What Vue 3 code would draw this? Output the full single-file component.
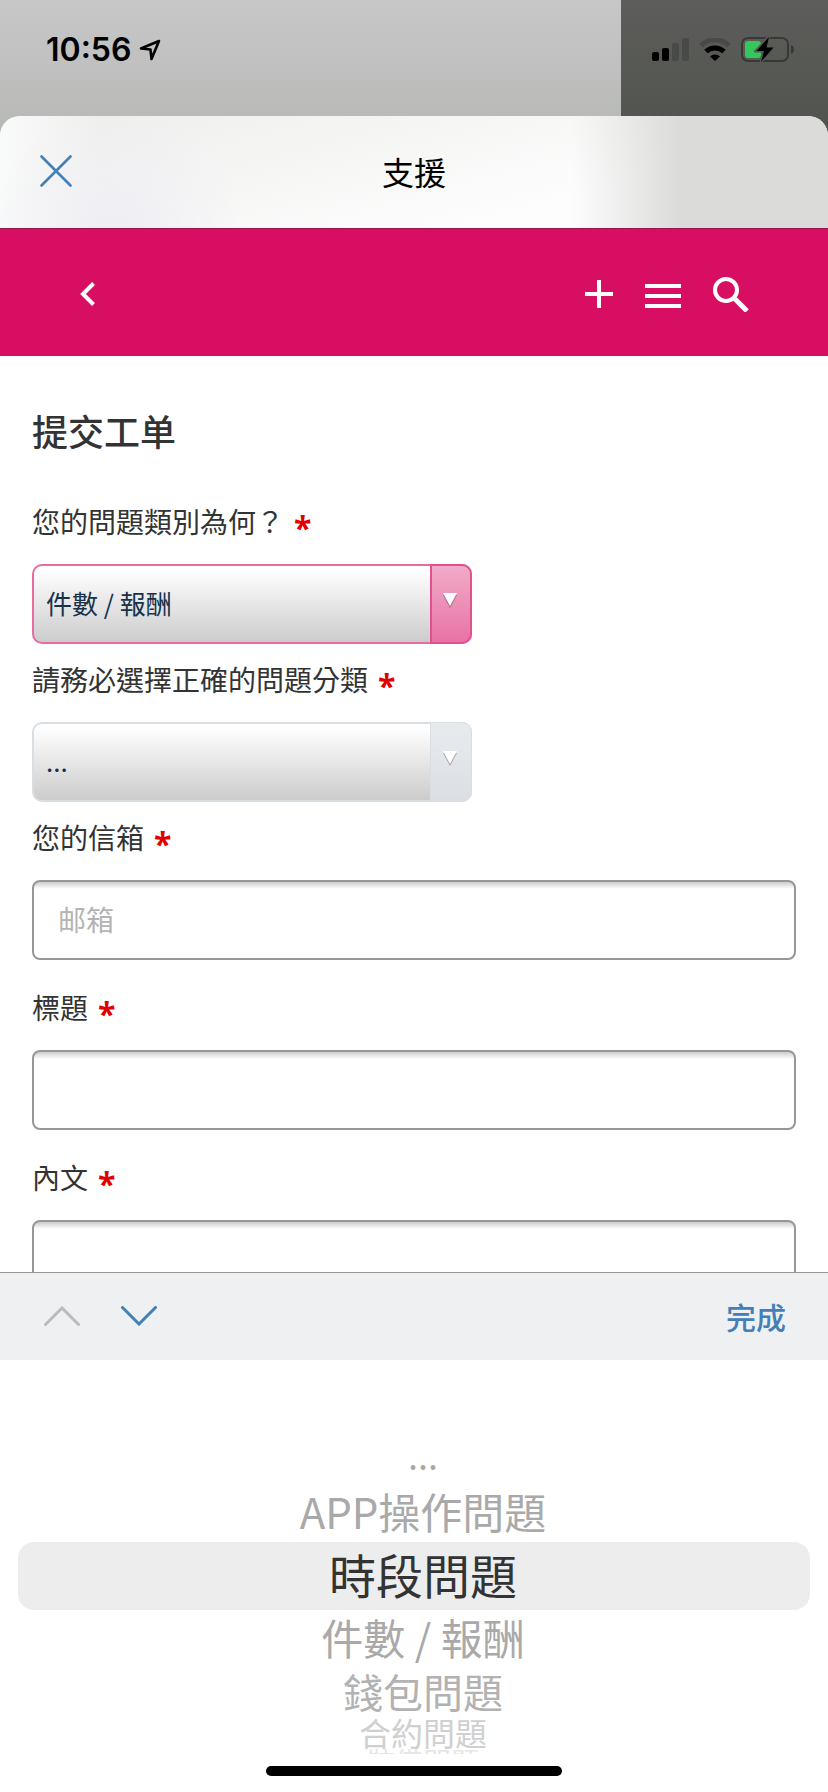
<script setup>
import { ref } from 'vue'

const category = ref('件數 / 報酬')
const subCategory = ref('...')
const email = ref('')
const subject = ref('')
const body = ref('')
const selected = ref('時段問題')

const categories = ['件數 / 報酬', '時段問題', '錢包問題', '合約問題']

const wheel = [
  { text: '...', size: 'far-top' },
  { text: 'APP操作問題', size: 'near' },
  { text: '時段問題', size: 'center' },
  { text: '件數 / 報酬', size: 'near' },
  { text: '錢包問題', size: 'mid' },
  { text: '合約問題', size: 'far' },
  { text: '裝備問題', size: 'edge' },
]
</script>

<template>
  <div class="screen">
    <div class="status">
      <div class="clock">
        <span>10:56</span>
        <svg width="22" height="22" viewBox="0 0 22 22" aria-hidden="true">
          <path d="M20 2 L2 9.5 L11.5 10.5 L12.5 20 Z" fill="none" stroke="#000" stroke-width="2.6" stroke-linejoin="round" />
        </svg>
      </div>
      <div class="signals">
        <svg width="37" height="24" viewBox="0 0 37 24" aria-hidden="true">
          <rect x="0" y="14" width="7" height="9" rx="2" />
          <rect x="10" y="10" width="7" height="13" rx="2" />
          <rect x="20" y="5" width="7" height="18" rx="2" fill="#484a47" />
          <rect x="30" y="0" width="7" height="23" rx="2" fill="#484a47" />
        </svg>
        <svg width="32" height="24" viewBox="0 0 32 24" aria-hidden="true">
          <path d="M2 7.5 A20 20 0 0 1 30 7.5" fill="none" stroke="#484a47" stroke-width="5" />
          <path d="M7 13.5 A13 13 0 0 1 25 13.5" fill="none" stroke="#000" stroke-width="5" />
          <path d="M16 23 L11 18.5 A7 7 0 0 1 21 18.5 Z" />
        </svg>
        <svg width="53" height="28" viewBox="0 0 53 28" aria-hidden="true">
          <rect x="1" y="2" width="46" height="23" rx="6" fill="none" stroke="#373936" stroke-width="2" />
          <rect x="4" y="5" width="16" height="17" rx="3" fill="#34c759" />
          <path d="M50 9 Q53 10 53 13.5 Q53 17 50 18 Z" fill="#373936" />
          <path d="M28 0 L14 15.5 H22 L19.500 27 L34 11 H26 Z" fill="#565954" stroke="#565954" stroke-width="2" stroke-linejoin="round" />
          <path d="M28 1 L15.500 15 H23 L20 26 L32.500 11.500 H25.500 Z" />
        </svg>
      </div>
    </div>

    <header class="sheet-head">
      <button class="close" type="button" aria-label="關閉">
        <svg width="32" height="32" viewBox="0 0 32 32">
          <path d="M1.500 1.500 L30.500 30.500 M30.500 1.500 L1.500 30.500" fill="none" stroke="#4380b7" stroke-width="2.600" stroke-linecap="round" />
        </svg>
      </button>
      <h1>支援</h1>
    </header>

    <nav class="bar">
      <button type="button" aria-label="返回">
        <svg width="16" height="24" viewBox="0 0 16 24">
          <path d="M13.500 1.500 L3 12 L13.500 22.500" fill="none" stroke="#fff" stroke-width="4" />
        </svg>
      </button>
      <div class="actions">
        <button type="button" aria-label="新增">
          <svg width="28" height="28" viewBox="0 0 28 28">
            <path d="M14 0 V28 M0 14 H28" stroke="#fff" stroke-width="4" />
          </svg>
        </button>
        <button type="button" aria-label="選單">
          <svg width="36" height="28" viewBox="0 0 36 28">
            <path d="M0 6 H36 M0 16 H36 M0 26 H36" stroke="#fff" stroke-width="4" />
          </svg>
        </button>
        <button type="button" aria-label="搜尋">
          <svg width="36" height="36" viewBox="0 0 36 36">
            <circle cx="13" cy="14" r="11" fill="none" stroke="#fff" stroke-width="4" />
            <path d="M22 23 L34 35" stroke="#fff" stroke-width="5" />
          </svg>
        </button>
      </div>
    </nav>

    <form class="form" @submit.prevent>
      <h2>提交工单</h2>

      <div class="field">
        <label for="category">您的問題類別為何？<span class="star">*</span></label>
        <div class="select active">
          <select id="category" v-model="category">
            <option v-for="c in categories" :key="c">{{ c }}</option>
          </select>
          <span class="arrow"><svg width="14" height="15" viewBox="0 0 14 15"><path d="M0 2 H14 L7 15 Z" fill="#0004" /><path d="M0 0 H14 L7 13 Z" fill="#fff" /></svg></span>
        </div>
      </div>

      <div class="field">
        <label for="sub">請務必選擇正確的問題分類<span class="star">*</span></label>
        <div class="select">
          <select id="sub" v-model="subCategory">
            <option>...</option>
          </select>
          <span class="arrow"><svg width="14" height="15" viewBox="0 0 14 15"><path d="M0 2 H14 L7 15 Z" fill="#0004" /><path d="M0 0 H14 L7 13 Z" fill="#fff" /></svg></span>
        </div>
      </div>

      <div class="field spaced">
        <label for="email">您的信箱<span class="star">*</span></label>
        <input id="email" v-model="email" type="email" placeholder="邮箱" />
      </div>

      <div class="field spaced">
        <label for="subject">標題<span class="star">*</span></label>
        <input id="subject" v-model="subject" type="text" />
      </div>

      <div class="field">
        <label for="body">內文<span class="star">*</span></label>
        <textarea id="body" v-model="body"></textarea>
      </div>
    </form>

    <div class="toolbar">
      <div class="steps">
        <button type="button" aria-label="上一個" disabled>
          <svg width="36" height="20" viewBox="0 0 36 20">
            <path d="M1.500 18.500 L18 2 L34.500 18.500" fill="none" stroke="#bbb" stroke-width="3" stroke-linecap="round" />
          </svg>
        </button>
        <button type="button" aria-label="下一個">
          <svg width="36" height="20" viewBox="0 0 36 20">
            <path d="M1.500 1.500 L18 18 L34.500 1.500" fill="none" stroke="#4380b7" stroke-width="3" stroke-linecap="round" />
          </svg>
        </button>
      </div>
      <button class="done" type="button">完成</button>
    </div>

    <div class="picker">
      <ul role="listbox" aria-label="問題分類">
        <li
          v-for="row in wheel"
          :key="row.text"
          role="option"
          :aria-selected="row.text === selected"
          :class="row.size"
          @click="selected = row.text"
        >{{ row.text }}</li>
      </ul>
      <div class="home"></div>
    </div>
  </div>
</template>

<style>
body {
  margin: 0;
}
</style>

<style scoped>
* {
  box-sizing: border-box;
}
.screen {
  display: flex;
  flex-direction: column;
  height: 100vh;
  overflow: hidden;
  background: #fff;
  color: #333;
  font-family: "Noto Sans CJK TC", "Noto Sans CJK SC", sans-serif;
}
svg {
  display: block;
}
button {
  padding: 0;
  border: 0;
  background: none;
  font-family: inherit;
}
.status {
  display: flex;
  flex: none;
  align-items: center;
  justify-content: space-between;
  height: 140px;
  padding: 0 34px 40px 46px;
  background:
    linear-gradient(#5d5d5b, #50544d) right / 25% 100% no-repeat,
    linear-gradient(#c7c7c8, #b6b8b5);
}
.clock {
  display: flex;
  align-items: center;
  gap: 8px;
  color: #000;
  font: 600 32px/40px Inter, sans-serif;
}
.signals {
  display: flex;
  align-items: center;
  gap: 10px;
}
.sheet-head {
  display: flex;
  flex: none;
  align-items: center;
  height: 113px;
  margin-top: -24px;
  padding: 0 40px 2px;
  border-bottom: 1px solid #99134c;
  border-radius: 20px 20px 0 0;
  background:
    linear-gradient(90deg, #dbdcda00 69%, #dbdcda 82%),
    radial-gradient(circle at 14% 110%, #eeedf3, #eeedf300 18%),
    linear-gradient(90deg, #f9fafa, #f9fafa00 12%),
    linear-gradient(165deg, #ededeb, #fdfdfd 70%);
}
.sheet-head h1 {
  flex: 1;
  margin: 0 32px 0 0;
  color: #000;
  font-size: 32px;
  font-weight: 400;
  line-height: 44px;
  text-align: center;
}
.bar {
  display: flex;
  flex: none;
  align-items: center;
  justify-content: space-between;
  height: 127px;
  padding: 2px 79px 0 80px;
  background: #d70e62;
}
.actions {
  display: flex;
  align-items: center;
  gap: 32px;
}
.form {
  flex: 1;
  min-height: 0;
  overflow: hidden;
  padding: 48px 32px 0;
}
.form h2 {
  margin: 0 0 46px;
  font-size: 36px;
  font-weight: 500;
  line-height: 52px;
}
.field {
  display: flex;
  flex-direction: column;
  gap: 22px;
  margin-bottom: 16px;
}
.spaced {
  margin-bottom: 28px;
}
label {
  display: flex;
  gap: 10px;
  height: 40px;
  font-size: 28px;
  font-weight: 400;
  line-height: 38px;
}
.star {
  color: #e00000;
  font: 700 32px/52px "Open Sans", sans-serif;
}
.select {
  position: relative;
  width: 440px;
  max-width: 100%;
  height: 80px;
}
select {
  width: 100%;
  height: 100%;
  padding: 0 56px 4px 12px;
  border: 2px solid #d9dee2;
  border-radius: 10px;
  background: linear-gradient(#fff 5%, #f4f4f4 25%, #ccc);
  color: #17324a;
  appearance: none;
  font-family: inherit;
  font-size: 26px;
}
.arrow {
  position: absolute;
  inset: 0 0 0 auto;
  display: flex;
  align-items: center;
  justify-content: center;
  width: 42px;
  padding: 0 2px 8px 0;
  border: 1px solid #d9dee2;
  border-radius: 0 10px 10px 0;
  background: linear-gradient(#e8ebee, #dbdfe4);
  pointer-events: none;
}
.active select {
  border-color: #e76ca0;
}
.active .arrow {
  border: 2px solid #e2508d;
  background: linear-gradient(#f1abc8, #e873a5);
}
input,
textarea {
  display: block;
  width: 100%;
  height: 80px;
  padding: 0 24px 2px;
  border: 2px solid #979797;
  border-radius: 8px;
  background: linear-gradient(#ccc, #fff 7px);
  color: #333;
  font-family: inherit;
  font-size: 28px;
}
textarea {
  height: 240px;
  padding: 20px 24px;
  resize: none;
}
input::placeholder {
  color: #b4b4b4;
}
.toolbar {
  display: flex;
  flex: none;
  align-items: center;
  justify-content: space-between;
  height: 88px;
  padding: 0 42px 2px 44px;
  border-top: 1px solid #979797;
  background: #eff0f2;
}
.steps {
  display: flex;
  gap: 41px;
}
.done {
  color: #4380b7;
  font-size: 30px;
  font-weight: 500;
  line-height: 44px;
}
.picker {
  display: flex;
  flex: none;
  flex-direction: column;
  padding: 68px 18px 16px;
  background: #fff;
}
ul {
  margin: 0;
  padding: 0;
  list-style: none;
}
li {
  padding: 0 0 4px 18px;
  color: #a9a9a9;
  text-align: center;
  white-space: nowrap;
}
.far-top {
  font-size: 36px;
  line-height: 52px;
}
.near {
  font-size: 42px;
  line-height: 54px;
}
.center {
  border-radius: 16px;
  background: #ededed;
  color: #333;
  font-size: 47px;
  line-height: 64px;
}
.mid {
  color: #b2b2b2;
  font-size: 40px;
  line-height: 46px;
}
.far {
  padding-bottom: 0;
  color: #d0d0d0;
  font-size: 32px;
  line-height: 28px;
}
.edge {
  height: 8px;
  overflow: hidden;
  color: #e6e6e6;
  font-size: 28px;
  line-height: 30px;
}
.home {
  align-self: center;
  width: 296px;
  height: 10px;
  margin-top: 12px;
  border-radius: 5px;
  background: #000;
}
</style>
